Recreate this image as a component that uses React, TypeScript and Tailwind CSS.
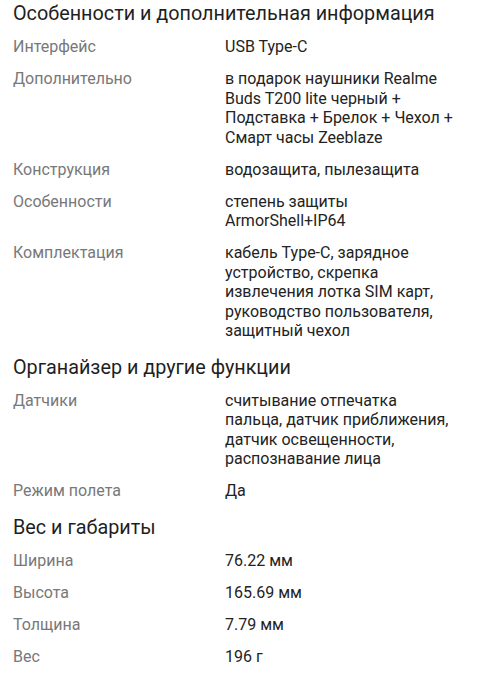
import React from 'react';

type Spec = { label: string; value: string };

const sections: { title: string; rows: Spec[] }[] = [
  {
    title: 'Особенности и дополнительная информация',
    rows: [
      { label: 'Интерфейс', value: 'USB Type-C' },
      {
        label: 'Дополнительно',
        value: 'в подарок наушники Realme Buds T200 lite черный + Подставка + Брелок + Чехол + Смарт часы Zeeblaze',
      },
      { label: 'Конструкция', value: 'водозащита, пылезащита' },
      { label: 'Особенности', value: 'степень защиты ArmorShell+IP64' },
      {
        label: 'Комплектация',
        value: 'кабель Type-C, зарядное устройство, скрепка извлечения лотка SIM карт, руководство пользователя, защитный чехол',
      },
    ],
  },
  {
    title: 'Органайзер и другие функции',
    rows: [
      {
        label: 'Датчики',
        value: 'считывание отпечатка пальца, датчик приближения, датчик освещенности, распознавание лица',
      },
      { label: 'Режим полета', value: 'Да' },
    ],
  },
  {
    title: 'Вес и габариты',
    rows: [
      { label: 'Ширина', value: '76.22 мм' },
      { label: 'Высота', value: '165.69 мм' },
      { label: 'Толщина', value: '7.79 мм' },
      { label: 'Вес', value: '196 г' },
    ],
  },
];

const App = () => {
  return (
    <div className="min-h-screen w-[479px] bg-white pt-px px-[13px] font-['Roboto',sans-serif]">
      {sections.map((section, i) => (
        <section key={section.title} className={i > 0 ? 'mt-[14px]' : ''}>
          <h2 className="text-[19.8px] leading-[26px] text-[#1f1f1f] mb-2.5">{section.title}</h2>
          <div className="flex flex-col gap-[12.5px]">
            {section.rows.map((row) => (
              <div key={row.label} className="grid grid-cols-[212px_230px] text-[16px] leading-[19.5px]">
                <span className="text-[#787878]">{row.label}</span>
                <span className="text-[#232323]">{row.value}</span>
              </div>
            ))}
          </div>
        </section>
      ))}
    </div>
  );
};

export default App;
